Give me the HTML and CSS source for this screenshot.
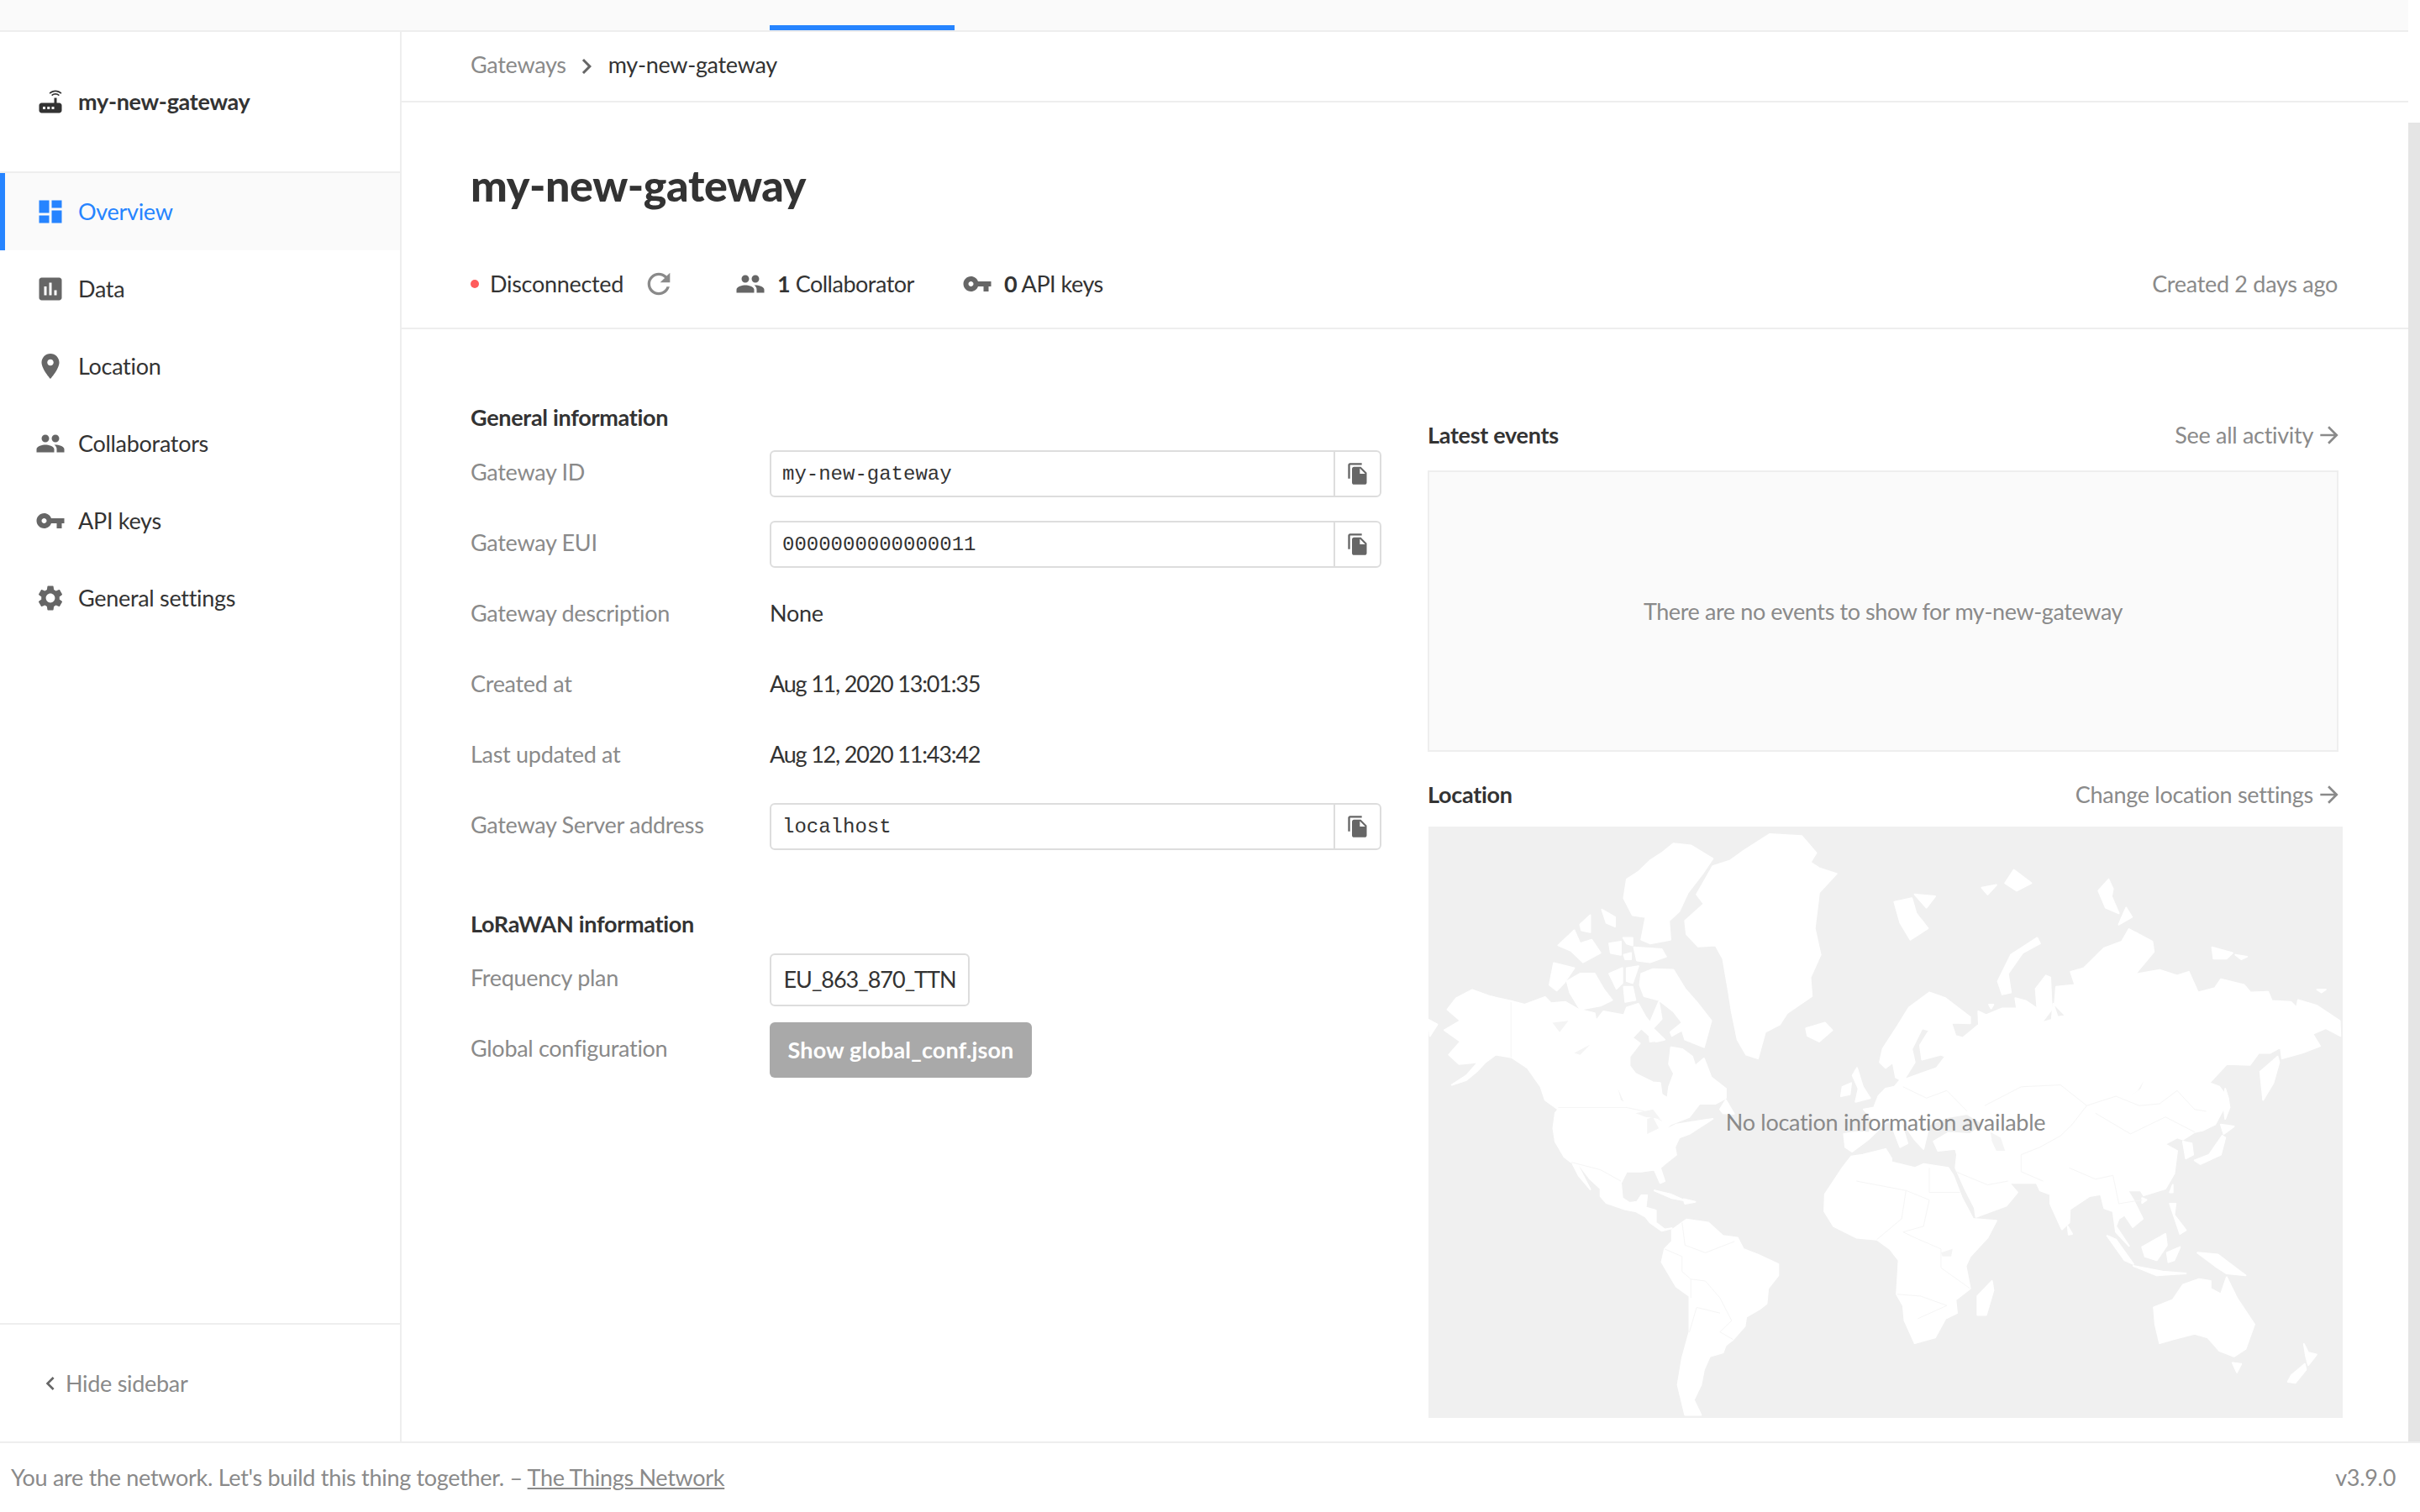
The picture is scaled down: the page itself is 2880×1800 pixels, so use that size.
FILE: index.html
```html
<!DOCTYPE html>
<html lang="en">
<head>
  <meta charset="UTF-8" />
  <title>my-new-gateway</title>
  <link rel="stylesheet" href="styles.css">
</head>
<body>
  <svg class="sprites" width="0" height="0">
    <symbol id="i-dashboard" viewBox="0 0 24 24"><path d="M3 13h8V3H3v10zm0 8h8v-6H3v6zm10 0h8V11h-8v10zm0-18v6h8V3h-8z"/></symbol>
    <symbol id="i-data" viewBox="0 0 24 24"><path d="M19 3H5c-1.1 0-2 .9-2 2v14c0 1.1.9 2 2 2h14c1.1 0 2-.9 2-2V5c0-1.1-.9-2-2-2zM9 17H7v-7h2v7zm4 0h-2V7h2v10zm4 0h-2v-4h2v4z"/></symbol>
    <symbol id="i-place" viewBox="0 0 24 24"><path d="M12 2C8.13 2 5 5.13 5 9c0 5.25 7 13 7 13s7-7.75 7-13c0-3.87-3.13-7-7-7zm0 9.5c-1.38 0-2.5-1.12-2.5-2.5s1.12-2.5 2.5-2.5 2.5 1.12 2.5 2.5-1.12 2.5-2.5 2.5z"/></symbol>
    <symbol id="i-people" viewBox="0 0 24 24"><path d="M16 11c1.66 0 2.99-1.34 2.99-3S17.66 5 16 5c-1.66 0-3 1.34-3 3s1.34 3 3 3zm-8 0c1.66 0 2.99-1.34 2.99-3S9.66 5 8 5C6.34 5 5 6.34 5 8s1.34 3 3 3zm0 2c-2.33 0-7 1.17-7 3.5V19h14v-2.5c0-2.33-4.67-3.5-7-3.5zm8 0c-.29 0-.62.02-.97.05 1.16.84 1.97 1.97 1.97 3.45V19h6v-2.5c0-2.33-4.67-3.5-7-3.5z"/></symbol>
    <symbol id="i-key" viewBox="0 0 24 24"><path d="M12.65 10C11.83 7.67 9.61 6 7 6c-3.31 0-6 2.69-6 6s2.69 6 6 6c2.61 0 4.83-1.67 5.65-4H17v4h4v-4h2v-4H12.65zM7 14c-1.1 0-2-.9-2-2s.9-2 2-2 2 .9 2 2-.9 2-2 2z"/></symbol>
    <symbol id="i-settings" viewBox="0 0 24 24"><path d="M19.14 12.94c.04-.3.06-.61.06-.94 0-.32-.02-.64-.07-.94l2.03-1.58c.18-.14.23-.41.12-.61l-1.92-3.32c-.12-.22-.37-.29-.59-.22l-2.39.96c-.5-.38-1.03-.7-1.62-.94l-.36-2.54c-.04-.24-.24-.41-.48-.41h-3.84c-.24 0-.43.17-.47.41l-.36 2.54c-.59.24-1.13.57-1.62.94l-2.39-.96c-.22-.08-.47 0-.59.22L2.74 8.87c-.12.21-.08.47.12.61l2.03 1.58c-.05.3-.09.63-.09.94s.02.64.07.94l-2.03 1.58c-.18.14-.23.41-.12.61l1.92 3.32c.12.22.37.29.59.22l2.39-.96c.5.38 1.03.7 1.62.94l.36 2.54c.05.24.24.41.48.41h3.84c.24 0 .44-.17.47-.41l.36-2.54c.59-.24 1.13-.56 1.62-.94l2.39.96c.22.08.47 0 .59-.22l1.92-3.32c.12-.22.07-.47-.12-.61l-2.01-1.58zM12 15.6c-1.98 0-3.6-1.62-3.6-3.6s1.62-3.6 3.6-3.6 3.6 1.62 3.6 3.6-1.62 3.6-3.6 3.6z"/></symbol>
    <symbol id="i-router" viewBox="0 0 24 24"><path d="M20.2 5.9l.8-.8C19.6 3.7 17.8 3 16 3s-3.6.7-5 2.1l.8.8C13 4.8 14.5 4.2 16 4.2s3 .6 4.2 1.7zm-.9.8c-.9-.9-2.1-1.4-3.3-1.4s-2.4.5-3.3 1.4l.8.8c.7-.7 1.6-1 2.5-1 .9 0 1.8.3 2.5 1l.8-.8zM19 13h-2V9h-2v4H5c-1.1 0-2 .9-2 2v4c0 1.1.9 2 2 2h14c1.1 0 2-.9 2-2v-4c0-1.1-.9-2-2-2zM8 18H6v-2h2v2zm3.5 0h-2v-2h2v2zm3.5 0h-2v-2h2v2z"/></symbol>
    <symbol id="i-refresh" viewBox="0 0 24 24"><path d="M17.65 6.35C16.2 4.9 14.21 4 12 4c-4.42 0-7.99 3.58-7.99 8s3.57 8 7.99 8c3.73 0 6.84-2.55 7.73-6h-2.08c-.82 2.33-3.04 4-5.65 4-3.31 0-6-2.69-6-6s2.69-6 6-6c1.66 0 3.14.69 4.22 1.78L13 11h7V4l-2.35 2.35z"/></symbol>
    <symbol id="i-copy" viewBox="0 0 24 24"><path d="M16 1H4c-1.1 0-2 .9-2 2v14h2V3h12V1zm-1 4l6 6v10c0 1.1-.9 2-2 2H7.99C6.89 23 6 22.1 6 21l.01-14c0-1.1.89-2 2-2h7zm-1 7h5.5L14 6.5V12z"/></symbol>
    <symbol id="i-right" viewBox="0 0 24 24"><path d="M8.59 16.59L13.17 12 8.59 7.41 10 6l6 6-6 6-1.41-1.41z"/></symbol>
    <symbol id="i-left" viewBox="0 0 24 24"><path d="M15.41 16.59L10.83 12l4.58-4.59L14 6l-6 6 6 6 1.41-1.41z"/></symbol>
    <symbol id="i-arrow" viewBox="0 0 24 24"><path d="M12 4l-1.41 1.41L16.17 11H4v2h12.17l-5.58 5.59L12 20l8-8z"/></symbol>
  </svg>

  <div class="topbar"><span class="topbar-active"></span></div>

  <div class="middle">
    <aside class="sidebar">
      <div class="side-head">
        <svg class="icon dark"><use href="#i-router"/></svg>
        <span>my-new-gateway</span>
      </div>
      <nav class="side-nav">
        <a class="side-link active"><svg class="icon"><use href="#i-dashboard"/></svg>Overview</a>
        <a class="side-link"><svg class="icon"><use href="#i-data"/></svg>Data</a>
        <a class="side-link"><svg class="icon"><use href="#i-place"/></svg>Location</a>
        <a class="side-link"><svg class="icon"><use href="#i-people"/></svg>Collaborators</a>
        <a class="side-link"><svg class="icon"><use href="#i-key"/></svg>API keys</a>
        <a class="side-link"><svg class="icon"><use href="#i-settings"/></svg>General settings</a>
      </nav>
      <div class="side-foot">
        <svg class="chev"><use href="#i-left"/></svg>
        <span>Hide sidebar</span>
      </div>
    </aside>

    <main class="main">
      <div class="crumbs">
        <span class="crumb muted">Gateways</span>
        <svg class="chev crumb-sep"><use href="#i-right"/></svg>
        <span class="crumb">my-new-gateway</span>
      </div>

      <header class="head">
        <h1>my-new-gateway</h1>
        <div class="stats">
          <span class="dot"></span>
          <span>Disconnected</span>
          <svg class="refresh"><use href="#i-refresh"/></svg>
          <svg class="icon stat-icon"><use href="#i-people"/></svg>
          <span class="stat-text"><b>1</b> Collaborator</span>
          <svg class="icon stat-icon key"><use href="#i-key"/></svg>
          <span class="stat-text"><b>0</b> API keys</span>
          <span class="created muted">Created 2 days ago</span>
        </div>
      </header>

      <div class="content">
        <section class="col">
          <h3 class="first">General information</h3>
          <div class="row">
            <span class="label">Gateway ID</span>
            <div class="field"><span class="field-val">my-new-gateway</span><span class="field-btn"><svg><use href="#i-copy"/></svg></span></div>
          </div>
          <div class="row">
            <span class="label">Gateway EUI</span>
            <div class="field"><span class="field-val">0000000000000011</span><span class="field-btn"><svg><use href="#i-copy"/></svg></span></div>
          </div>
          <div class="row"><span class="label">Gateway description</span><span class="val">None</span></div>
          <div class="row"><span class="label">Created at</span><span class="val num">Aug 11, 2020 13:01:35</span></div>
          <div class="row"><span class="label">Last updated at</span><span class="val num">Aug 12, 2020 11:43:42</span></div>
          <div class="row">
            <span class="label">Gateway Server address</span>
            <div class="field"><span class="field-val">localhost</span><span class="field-btn"><svg><use href="#i-copy"/></svg></span></div>
          </div>

          <h3 class="second">LoRaWAN information</h3>
          <div class="row">
            <span class="label">Frequency plan</span>
            <span class="plan">EU_863_870_TTN</span>
          </div>
          <div class="row">
            <span class="label">Global configuration</span>
            <span class="btn">Show global_conf.json</span>
          </div>
        </section>

        <section class="col right">
          <div class="col-head">
            <h3>Latest events</h3>
            <a class="more">See all activity<svg><use href="#i-arrow"/></svg></a>
          </div>
          <div class="events">There are no events to show for my-new-gateway</div>

          <div class="col-head loc">
            <h3>Location</h3>
            <a class="more">Change location settings<svg><use href="#i-arrow"/></svg></a>
          </div>
          <div class="map">
            <svg class="world" viewBox="0 0 3136 1568" preserveAspectRatio="none">
              <g class="land">
                <!-- americas -->
                <polygon points="65,485 95,455 150,433 210,450 280,462 330,472 400,452 420,468 470,465 515,485 570,495 575,515 600,490 670,500 680,480 720,470 745,505 760,520 790,465 800,510 770,535 810,565 780,570 730,535 700,560 725,575 690,610 690,635 710,655 770,678 795,680 800,710 820,720 825,690 842,655 825,630 832,585 870,590 905,610 915,635 945,615 970,665 1020,695 1020,720 985,735 930,735 895,770 830,790 800,810 850,790 975,775 935,795 895,815 860,825 845,850 850,870 810,895 795,905 810,940 795,945 775,910 730,915 680,915 660,945 665,985 690,998 715,995 730,978 750,978 745,1010 780,1018 780,1050 810,1068 835,1065 800,1072 760,1050 745,1035 710,1020 675,1015 610,998 590,980 590,960 555,935 520,900 490,890 465,875 435,835 428,800 435,760 445,750 400,725 385,690 340,640 285,612 230,605 195,625 165,650 130,672 80,685 130,660 170,625 105,630 70,605 110,570 55,540 110,515"/>
                <polygon points="880,250 945,205 920,180 975,105 1035,90 1080,65 1170,20 1280,25 1330,70 1310,95 1340,110 1400,125 1340,175 1325,270 1345,340 1310,400 1315,450 1230,495 1205,525 1155,545 1130,615 1090,605 1060,565 1040,490 1030,440 1010,350 985,315 925,318 885,285"/>
                <polygon points="680,140 720,120 760,90 800,70 840,45 900,50 975,85 940,125 890,175 860,225 825,250 830,300 760,310 730,300 745,240 700,235 670,190"/>
                <polygon points="730,390 770,378 840,380 880,430 925,470 970,515 945,585 880,565 870,540 835,555 830,545 870,520 840,490 790,460 740,450 725,420"/>
                <polygon points="475,410 520,390 570,390 600,430 630,460 590,475 520,485 485,440"/>
                <polygon points="415,420 430,362 500,375 465,415 440,435"/>
                <polygon points="445,315 500,275 520,310 560,300 590,335 530,360 490,330"/>
                <polygon points="705,320 800,325 815,345 760,360 715,355"/>
                <polygon points="620,310 660,305 660,340 625,335"/>
                <polygon points="620,390 665,375 665,415 645,430"/>
                <polygon points="680,375 720,370 700,415 680,410"/>
                <polygon points="670,425 700,425 710,460 675,465"/>
                <polygon points="595,220 640,240 640,265 610,255"/>
                <polygon points="520,260 555,235 555,280 525,275"/>
                <polygon points="668,295 700,295 700,315 680,310"/>
                <polygon points="670,340 695,335 695,352 675,352"/>
                <polygon points="755,535 790,555 805,565 760,570"/>
                <polygon points="0,512 30,525 5,555"/>
                <polygon points="1295,535 1360,520 1385,540 1340,570 1300,555"/>
                <polygon points="835,1070 885,1042 960,1050 1010,1085 1060,1090 1080,1120 1130,1135 1200,1160 1200,1190 1165,1225 1160,1265 1135,1280 1090,1300 1085,1325 1045,1360 1020,1375 1010,1395 965,1405 945,1440 935,1480 910,1520 935,1560 880,1560 855,1480 870,1410 895,1340 895,1245 850,1220 800,1155 810,1120 835,1100"/>
                <polygon points="775,965 830,975 880,992 835,985"/>
                <polygon points="875,988 915,995 880,1000"/>
                <polygon points="495,895 510,895 555,962 515,925"/>
                <polygon points="1470,640 1490,690 1515,720 1465,730 1475,695 1455,660"/>
                <polygon points="1420,690 1450,680 1445,710 1415,715"/>
                <polygon points="1000,750 1020,725 1048,762 1010,760"/>
              </g>
              <g class="lake">
                <polygon points="750,775 770,770 790,800 750,815"/>
                <polygon points="710,760 770,750 795,775 745,770"/>
                <polygon points="650,695 670,730 660,725"/>
                <polygon points="425,520 480,515 450,545"/>
                <polygon points="500,600 555,578 520,605"/>
              </g>
              <g class="borders">
                <polyline points="283,465 283,612"/>
                <polyline points="445,745 680,745 740,755 800,780"/>
                <polyline points="490,890 590,910 660,940"/>
                <polyline points="870,1050 880,1110 950,1130 1050,1100"/>
                <polyline points="810,1120 870,1140 870,1180 900,1200 900,1250"/>
                <polyline points="900,1200 950,1205 1000,1250 1040,1310 1000,1340 1045,1360"/>
                <polyline points="895,1340 920,1275 1000,1290"/>
              </g>
              <g transform="translate(1568 0)">
                <g class="land">
                  <!-- eurasia, africa, oceania -->
                  <polygon points="-143,815 -100,810 -55,812 -45,775 -75,750 -40,745 -25,715 0,695 30,690 50,672 30,640 45,625 60,672 120,655 175,640 205,610 190,605 125,618 118,580 150,540 125,535 90,590 100,625 60,675 35,665 25,625 0,640 -20,625 -10,590 40,530 80,480 150,440 205,455 290,505 290,522 225,520 240,555 265,560 320,525 318,490 345,500 400,482 450,482 445,455 480,462 525,485 535,520 570,512 575,470 590,505 618,502 580,472 585,425 650,420 635,385 680,375 750,322 810,305 835,272 915,305 920,332 855,392 940,380 1000,395 1040,385 1072,440 1130,428 1150,405 1230,420 1252,440 1312,438 1325,462 1390,465 1410,480 1415,460 1480,475 1558,515 1560,555 1510,535 1465,550 1490,582 1430,600 1360,615 1355,585 1320,600 1280,600 1250,632 1170,630 1110,680 1145,690 1160,705 1165,740 1130,790 1090,805 1060,810 1020,830 1000,825 958,842 1000,860 990,920 960,960 885,978 875,965 830,965 850,990 882,1040 848,1062 820,1030 800,1040 790,1060 835,1112 790,1075 780,1020 750,1012 738,975 700,980 632,1015 630,1050 605,1068 565,1000 565,975 530,965 518,945 470,945 425,945 430,950 452,970 415,1005 310,1035 305,1010 275,965 240,905 245,870 240,855 180,860 165,835 215,812 290,815 340,790 280,762 215,770 150,790 130,855 100,830 60,785 50,775 75,840 50,850 15,780 -10,790 -30,808 -60,830 -115,862 -138,850"/>
                  <polygon points="-78,870 0,855 20,880 20,890 100,905 130,895 215,905 232,925 262,985 300,1040 380,1045 350,1090 290,1140 275,1165 290,1225 240,1255 245,1290 205,1305 170,1355 100,1370 65,1310 60,1270 38,1240 45,1150 15,1120 -30,1095 -100,1090 -178,1060 -210,1020 -208,975 -148,905 -118,875"/>
                  <polygon points="315,1245 365,1205 370,1230 345,1295 315,1295"/>
                  <polygon points="625,1060 640,1080 628,1082"/>
                  <polygon points="760,1085 790,1095 850,1160 820,1150"/>
                  <polygon points="850,1165 950,1180 1030,1185 930,1190"/>
                  <polygon points="880,1115 960,1080 965,1110 930,1150 890,1140"/>
                  <polygon points="965,1130 1010,1115 990,1150 970,1155"/>
                  <polygon points="1070,1130 1140,1135 1200,1170 1235,1190 1170,1185 1130,1165"/>
                  <polygon points="975,1000 995,1000 990,1030 1030,1070 1010,1080"/>
                  <polygon points="985,950 985,970 975,970"/>
                  <polygon points="880,985 895,990 880,998"/>
                  <polygon points="1060,885 1110,870 1155,820 1165,825 1150,870 1080,895"/>
                  <polygon points="1150,790 1195,795 1160,815"/>
                  <polygon points="1165,695 1175,720 1180,745 1165,775 1160,740"/>
                  <polygon points="1020,835 1050,840 1055,870 1030,880"/>
                  <polygon points="1285,650 1345,610 1350,625 1330,680 1295,725"/>
                  <polygon points="920,1275 985,1255 1020,1215 1075,1200 1115,1205 1115,1225 1150,1240 1170,1195 1205,1250 1265,1320 1235,1385 1195,1405 1145,1390 1105,1355 1060,1345 985,1360 940,1370 925,1320"/>
                  <polygon points="1190,1422 1220,1425 1205,1447"/>
                  <polygon points="1435,1372 1450,1395 1478,1400 1450,1428 1442,1405"/>
                  <polygon points="1438,1425 1442,1440 1405,1475 1380,1472 1392,1455"/>
                  <polygon points="385,410 430,340 520,295 530,310 470,335 420,390 430,440 400,445"/>
                  <polygon points="515,430 550,395 565,400 570,485 535,520 520,480"/>
                  <polygon points="730,170 765,140 780,165 775,185 800,230 755,215"/>
                  <polygon points="800,260 825,215 845,240"/>
                  <polygon points="30,200 90,190 105,230 145,270 85,300 50,255"/>
                  <polygon points="100,180 170,185 140,215"/>
                  <polygon points="330,162 380,155 350,180"/>
                  <polygon points="410,150 440,115 500,150 450,170"/>
                  <polygon points="1120,320 1190,335 1170,350 1125,350"/>
                  <polygon points="1200,340 1240,345 1220,352"/>
                  <polygon points="1480,432 1510,432 1495,440"/>
                  <polygon points="355,472 370,472 362,482"/>
                </g>
                <g class="lake">
                  <polygon points="360,810 395,825 410,860 380,860 365,835"/>
                  <polygon points="885,675 875,695 835,718 865,700"/>
                  <polygon points="190,1130 230,1120 225,1140 195,1140"/>
                </g>
                <g class="borders">
                  <polyline points="340,740 465,690 600,685 690,740 790,715 870,740 940,735 1000,700 1060,750 1100,755"/>
                  <polyline points="690,740 640,790 600,820 530,850 465,870 465,915 540,940"/>
                  <polyline points="720,760 840,815 960,770 1060,810"/>
                  <polyline points="150,905 150,970 255,970"/>
                  <polyline points="-100,940 70,965 150,990 130,1060 60,1075 100,1090 190,1120 190,1170 290,1225"/>
                  <polyline points="70,965 55,1040 -30,1095"/>
                  <polyline points="40,1240 120,1245 210,1270 110,1305"/>
                  <polyline points="60,690 140,720 210,700 280,755"/>
                  <polyline points="240,915 350,950 420,940"/>
                  <polyline points="630,905 720,935 780,925 800,1000 880,990"/>
                </g>
              </g>
            </svg>
            <span class="map-note">No location information available</span>
          </div>
        </section>
      </div>
    </main>

    <div class="scrollbar"></div>
  </div>

  <footer class="footer">
    <span>You are the network. Let's build this thing together. – <a class="footer-link">The Things Network</a></span>
    <span>v3.9.0</span>
  </footer>
</body>
</html>
```

FILE: styles.css
```css
* {
  box-sizing: border-box;
}

html, body {
  margin: 0;
  height: 1800px;
  overflow: hidden;
}

body {
  display: flex;
  flex-direction: column;
  background: #fff;
  color: #333;
  font-family: Lato, "Noto Sans", sans-serif;
  font-size: 27px;
  letter-spacing: -0.3px;
  line-height: 40px;
}

.sprites {
  position: absolute;
}

.muted, .label {
  color: #8a8a8a;
}

/* top bar */
.topbar {
  height: 38px;
  flex: none;
  margin-right: 14px;
  background: #fafafa;
  border-bottom: 2px solid #eee;
}

.topbar-active {
  display: block;
  width: 220px;
  height: 6px;
  margin: 30px 0 0 916px;
  background: #2684ff;
}

.middle {
  flex: 1;
  display: flex;
  min-height: 0;
}

/* sidebar */
.sidebar {
  width: 478px;
  flex: none;
  display: flex;
  flex-direction: column;
  border-right: 2px solid #eee;
}

.side-head {
  height: 168px;
  flex: none;
  display: flex;
  align-items: center;
  gap: 15px;
  padding-left: 42px;
  border-bottom: 2px solid #eee;
  font-weight: 700;
}

.icon {
  width: 36px;
  height: 36px;
  flex: none;
  fill: #666;
}

.icon.dark {
  fill: #333;
}

.side-nav {
  flex: 1;
}

.side-link {
  height: 92px;
  display: flex;
  align-items: center;
  gap: 15px;
  padding-left: 42px;
}

.side-link.active {
  padding-left: 36px;
  border-left: 6px solid #2684ff;
  background: #fafafa;
  color: #2684ff;
}

.side-link.active .icon {
  fill: #2684ff;
}

.side-foot {
  height: 141px;
  flex: none;
  display: flex;
  align-items: center;
  gap: 2px;
  padding-left: 44px;
  border-top: 2px solid #eee;
  color: #8a8a8a;
}

.chev {
  width: 32px;
  height: 32px;
  fill: #666;
  flex: none;
}

/* main */
.main {
  flex: 1;
  min-width: 0;
}

.crumbs {
  height: 84px;
  display: flex;
  align-items: center;
  padding-left: 82px;
  border-bottom: 2px solid #eee;
}

.crumb {
  padding-bottom: 4px;
}

.crumb-sep {
  width: 36px;
  height: 36px;
  margin: 0 8px 0 6px;
}

.head {
  height: 270px;
  padding: 60px 84px 0 82px;
  border-bottom: 2px solid #eee;
}

h1 {
  margin: 0;
  font-size: 52px;
  letter-spacing: -0.4px;
  line-height: 76px;
  font-weight: 900;
}

.stats {
  display: flex;
  align-items: center;
  height: 84px;
  margin-top: 38px;
}

.dot {
  width: 10px;
  height: 10px;
  margin-right: 13px;
  border-radius: 50%;
  background: #ff5b5b;
}

.refresh {
  width: 40px;
  height: 40px;
  margin: 0 71px 0 22px;
  fill: #8a8a8a;
}

.stat-icon {
  margin-right: 14px;
}

.stat-icon.key {
  margin-left: 57px;
}

.stat-text {
  letter-spacing: -0.5px;
}

.stat-text b {
  font-weight: 700;
}

.created {
  margin-left: auto;
}

.content {
  display: grid;
  grid-template-columns: minmax(0, 1fr) minmax(0, 1fr);
  column-gap: 55px;
  padding: 87px 83px 0 82px;
}

h3 {
  margin: 0 0 3px;
  font-size: 27px;
  line-height: 40px;
  font-weight: 700;
}

h3.first {
  margin: -2px 0 5px;
}

h3.second {
  margin: 54px 0 4px;
}

.row {
  display: flex;
  align-items: center;
  height: 84px;
}

.label {
  width: 356px;
  flex: none;
  padding-bottom: 4px;
}

.val {
  padding-bottom: 4px;
}

.num {
  letter-spacing: -1.2px;
}

.field {
  flex: 1;
  height: 56px;
  display: flex;
  border: 2px solid #ddd;
  border-radius: 6px;
}

.field-val {
  flex: 1;
  padding-left: 13px;
  font-family: "Liberation Mono", monospace;
  font-size: 24px;
  letter-spacing: 0;
  line-height: 54px;
}

.field-btn {
  width: 55px;
  display: flex;
  align-items: center;
  justify-content: center;
  border-left: 2px solid #ddd;
}

.field-btn svg {
  width: 28px;
  height: 28px;
  fill: #666;
}

.plan {
  height: 63px;
  width: 238px;
  display: flex;
  align-items: center;
  justify-content: center;
  border: 2px solid #ddd;
  border-radius: 6px;
  letter-spacing: -1px;
  white-space: nowrap;
}

.btn {
  height: 66px;
  width: 312px;
  display: flex;
  align-items: center;
  justify-content: center;
  border-radius: 6px;
  background: #a9a9a9;
  color: #fff;
  font-weight: 700;
  letter-spacing: 0.15px;
  white-space: nowrap;
}

.right {
  padding-top: 19px;
}

.col-head {
  display: flex;
  justify-content: space-between;
  align-items: center;
}

.col-head h3 {
  margin: 0;
}

.col-head.loc {
  margin-top: 31px;
}

.more {
  display: flex;
  align-items: center;
  gap: 3px;
  margin-right: -5px;
  color: #8a8a8a;
}

.more svg {
  width: 32px;
  height: 32px;
  fill: #8a8a8a;
}

.events {
  height: 335px;
  margin-top: 22px;
  display: flex;
  align-items: center;
  justify-content: center;
  border: 2px solid #eee;
  background: #fafafa;
  color: #8a8a8a;
  letter-spacing: -0.4px;
}

.map {
  position: relative;
  width: 1088px;
  height: 704px;
  margin: 18px 0 0 1px;
  background: #f0f0f0;
}

.world {
  display: block;
  width: 100%;
  height: 100%;
}

.land polygon {
  fill: #fff;
  stroke: #fff;
  stroke-width: 2px;
  stroke-linejoin: round;
  vector-effect: non-scaling-stroke;
}

.lake polygon {
  fill: #f4f4f4;
}

.borders polyline {
  fill: none;
  stroke: #f5f5f5;
  stroke-width: 1px;
  vector-effect: non-scaling-stroke;
}

.map-note {
  position: absolute;
  left: 0;
  right: 0;
  top: 332px;
  text-align: center;
  color: #8a8a8a;
}

.scrollbar {
  width: 14px;
  flex: none;
  margin-top: 108px;
  background: #e5e5e5;
}

/* footer */
.footer {
  height: 84px;
  flex: none;
  display: flex;
  align-items: center;
  justify-content: space-between;
  padding: 0 29px 0 13px;
  border-top: 2px solid #eee;
  color: #8a8a8a;
}

.footer-link {
  text-decoration: underline;
}
```
